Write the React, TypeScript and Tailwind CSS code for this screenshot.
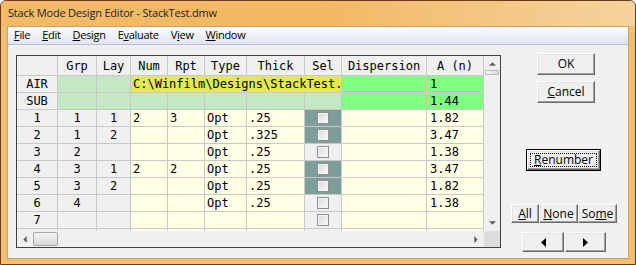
import React from 'react';

const cols = 'grid-cols-[41px_39px_34px_37px_37px_42px_58px_37px_85px_57px]';
const line = 'border-r border-b border-[#c8c8c8]';
const ui = "font-['Open_Sans','Liberation_Sans',sans-serif]";

type Row = {
  n: string;
  grp: string;
  lay: string;
  num: string;
  rpt: string;
  type: string;
  thick: string;
  sel: boolean | null;
  a: string;
};

const rows: Row[] = [
  { n: '1', grp: '1', lay: '1', num: '2', rpt: '3', type: 'Opt', thick: '.25', sel: true, a: '1.82' },
  { n: '2', grp: '1', lay: '2', num: '', rpt: '', type: 'Opt', thick: '.325', sel: true, a: '3.47' },
  { n: '3', grp: '2', lay: '', num: '', rpt: '', type: 'Opt', thick: '.25', sel: false, a: '1.38' },
  { n: '4', grp: '3', lay: '1', num: '2', rpt: '2', type: 'Opt', thick: '.25', sel: true, a: '3.47' },
  { n: '5', grp: '3', lay: '2', num: '', rpt: '', type: 'Opt', thick: '.25', sel: true, a: '1.82' },
  { n: '6', grp: '4', lay: '', num: '', rpt: '', type: 'Opt', thick: '.25', sel: false, a: '1.38' },
  { n: '7', grp: '', lay: '', num: '', rpt: '', type: '', thick: '', sel: false, a: '' },
  { n: '', grp: '', lay: '', num: '', rpt: '', type: '', thick: '', sel: null, a: '' },
];

function Check() {
  return (
    <span className="block w-[12px] h-[12px] border border-[#8f8f8f] bg-gradient-to-br from-[#d8d8d8] to-[#fafafa] shadow-[inset_0_0_0_1px_#f4f4f4]" />
  );
}

function Btn({ children, className = '' }: { children: React.ReactNode; className?: string }) {
  return (
    <button
      className={`flex items-center justify-center bg-[#f0f0f0] border border-t-white border-l-white border-r-[#696969] border-b-[#696969] shadow-[inset_-1px_-1px_0_#a0a0a0,inset_1px_1px_0_#e3e3e3] text-[12px] text-black ${ui} ${className}`}
    >
      {children}
    </button>
  );
}

function Arrow({ dir, className = '' }: { dir: 'up' | 'down' | 'left' | 'right'; className?: string }) {
  const pts = {
    up: '0,4 4,0 8,4',
    down: '0,0 4,4 8,0',
    left: '4,0 0,4 4,8',
    right: '0,0 4,4 0,8',
  }[dir];
  const vb = dir === 'up' || dir === 'down' ? '0 0 8 4' : '0 0 4 8';
  const size = dir === 'up' || dir === 'down' ? 'w-[7px] h-[4px]' : 'w-[4px] h-[7px]';
  return (
    <svg viewBox={vb} className={`${size} ${className}`}>
      <polygon points={pts} fill="#606060" />
    </svg>
  );
}

export default function App() {
  return (
    <div className="w-[636px] h-[265px] bg-[#f0c070] border border-[#6b3a1c] rounded-t-[6px] flex flex-col overflow-hidden">
      {/* title bar */}
      <div className="h-[25px] shrink-0 flex items-center px-[7px] bg-gradient-to-r from-[#f3bb68] via-[#f2b862] to-[#f5d39c]">
        <span className={`text-[11px] text-[#1e1e1e] ${ui} tracking-[-0.2px]`}>
          Stack Mode Design Editor - StackTest.dmw
        </span>
      </div>

      <div className="flex-1 mx-[6px] mb-[5px] bg-[#f0f0f0] border border-[#c7a16a] flex flex-col">
        {/* menu bar */}
        <div className={`h-[18px] shrink-0 flex items-center gap-[12px] pl-[6px] bg-gradient-to-b from-[#fbfcfe] to-[#dfe5f1] border-b border-[#b8c0d2] text-[11px] text-black ${ui} tracking-[-0.3px]`}>
          <span><u>F</u>ile</span>
          <span><u>E</u>dit</span>
          <span><u>D</u>esign</span>
          <span>E<u>v</u>aluate</span>
          <span>V<u>i</u>ew</span>
          <span><u>W</u>indow</span>
        </div>

        <div className="flex flex-1">
          {/* grid */}
          <div className="ml-[8px] mt-[10px] w-[485px] h-[193px] border border-[#404040] bg-[#f0f0f0] flex flex-col font-['DejaVu_Sans_Mono',monospace] text-[12px] text-black">
            <div className="flex h-[175px]">
              <div className="w-[467px] overflow-hidden">
                <div className={`grid ${cols}`}>
                  {/* header */}
                  <div className={`h-[20px] ${line} bg-[#f0f0f0]`} />
                  {['Grp', 'Lay', 'Num', 'Rpt', 'Type', 'Thick', 'Sel', 'Dispersion', 'A (n)'].map((h) => (
                    <div key={h} className={`h-[20px] ${line} bg-[#f0f0f0] flex items-center justify-center`}>
                      {h}
                    </div>
                  ))}

                  {/* AIR */}
                  <div className={`h-[17px] ${line} bg-[#f0f0f0] flex items-center justify-center`}>AIR</div>
                  <div className={`h-[17px] ${line} bg-[#c3e8c3]`} />
                  <div className={`h-[17px] ${line} bg-[#c3e8c3]`} />
                  <div className={`h-[17px] col-span-5 ${line} bg-[#e6e65c] flex items-center pl-[2px] overflow-hidden whitespace-nowrap`}>
                    C:\Winfilm\Designs\StackTest.
                  </div>
                  <div className={`h-[17px] ${line} bg-[#80ff80]`} />
                  <div className={`h-[17px] ${line} bg-[#80ff80] flex items-center pl-[3px]`}>1</div>

                  {/* SUB */}
                  <div className={`h-[17px] ${line} bg-[#f0f0f0] flex items-center justify-center`}>SUB</div>
                  {[0, 1, 2, 3, 4, 5, 6].map((i) => (
                    <div key={i} className={`h-[17px] ${line} bg-[#c3e8c3]`} />
                  ))}
                  <div className={`h-[17px] ${line} bg-[#80ff80]`} />
                  <div className={`h-[17px] ${line} bg-[#80ff80] flex items-center pl-[3px]`}>1.44</div>

                  {rows.map((r, i) => (
                    <React.Fragment key={i}>
                      <div className={`h-[17px] ${line} bg-[#f0f0f0] flex items-center justify-center`}>{r.n}</div>
                      <div className={`h-[17px] ${line} bg-[#f0f0f0] flex items-center justify-center`}>{r.grp}</div>
                      <div className={`h-[17px] ${line} bg-[#f0f0f0] flex items-center justify-center`}>{r.lay}</div>
                      <div className={`h-[17px] ${line} bg-[#ffffe6] flex items-center pl-[2px]`}>{r.num}</div>
                      <div className={`h-[17px] ${line} bg-[#ffffe6] flex items-center pl-[2px]`}>{r.rpt}</div>
                      <div className={`h-[17px] ${line} bg-[#ffffe6] flex items-center pl-[2px]`}>{r.type}</div>
                      <div className={`h-[17px] ${line} bg-[#ffffe6] flex items-center pl-[2px]`}>{r.thick}</div>
                      <div
                        className={`h-[17px] ${line} ${r.sel ? 'bg-[#7f9d9a]' : 'bg-[#f0f0f0]'} flex items-center justify-center`}
                      >
                        {r.sel !== null && <Check />}
                      </div>
                      <div className={`h-[17px] ${line} bg-[#ffffe6]`} />
                      <div className={`h-[17px] ${line} bg-[#ffffe6] flex items-center pl-[3px]`}>{r.a}</div>
                    </React.Fragment>
                  ))}
                </div>
              </div>

              {/* vertical scrollbar */}
              <div className="w-[16px] bg-[#f0f0f0] flex flex-col items-center">
                <div className="h-[16px] flex items-center justify-center">
                  <Arrow dir="up" />
                </div>
                <div className="w-[14px] h-[5px] -mt-[2px] rounded-[1px] border border-[#b8b8b8] bg-gradient-to-r from-[#f4f4f4] to-[#dedede]" />
                <div className="flex-1" />
                <div className="h-[16px] flex items-center justify-center">
                  <Arrow dir="down" />
                </div>
              </div>
            </div>

            {/* horizontal scrollbar */}
            <div className="flex h-[16px]">
              <div className="w-[467px] bg-[#f0f0f0] flex items-center">
                <div className="w-[16px] flex items-center justify-center">
                  <Arrow dir="left" />
                </div>
                <div className="w-[25px] h-[14px] rounded-[2px] border border-[#a8a8a8] bg-gradient-to-b from-[#f4f4f4] to-[#d8d8d8]" />
                <div className="flex-1" />
                <div className="w-[16px] flex items-center justify-center">
                  <Arrow dir="right" />
                </div>
              </div>
              <div className="w-[16px] bg-[#dcdcdc]" />
            </div>
          </div>

          {/* buttons */}
          <div className="flex-1 flex flex-col items-start">
            <Btn className="ml-[36px] mt-[8px] w-[58px] h-[22px]">OK</Btn>
            <Btn className="ml-[36px] mt-[6px] w-[58px] h-[22px]">
              <span><u>C</u>ancel</span>
            </Btn>
            <div className="ml-[25px] mt-[46px] w-[75px] h-[22px] border border-black">
              <Btn className="w-full h-full p-[2px]">
                <span className="self-stretch flex-1 flex items-center justify-center border border-dotted border-black">
                  <u>R</u>enumber
                </span>
              </Btn>
            </div>
            <div className="ml-[10px] mt-[33px] flex">
              <Btn className="w-[28px] h-[19px]">
                <span><u>A</u>ll</span>
              </Btn>
              <Btn className="w-[39px] h-[19px]">
                <span><u>N</u>one</span>
              </Btn>
              <Btn className="w-[39px] h-[19px]">
                <span>So<u>m</u>e</span>
              </Btn>
            </div>
            <div className="ml-[21px] mt-[9px] flex gap-[1px]">
              <Btn className="w-[42px] h-[20px]">
                <svg viewBox="0 0 5 9" className="w-[5px] h-[9px]">
                  <polygon points="5,0 0,4.5 5,9" fill="#000" />
                </svg>
              </Btn>
              <Btn className="w-[41px] h-[20px]">
                <svg viewBox="0 0 5 9" className="w-[5px] h-[9px]">
                  <polygon points="0,0 5,4.5 0,9" fill="#000" />
                </svg>
              </Btn>
            </div>
          </div>
        </div>
      </div>
    </div>
  );
}
